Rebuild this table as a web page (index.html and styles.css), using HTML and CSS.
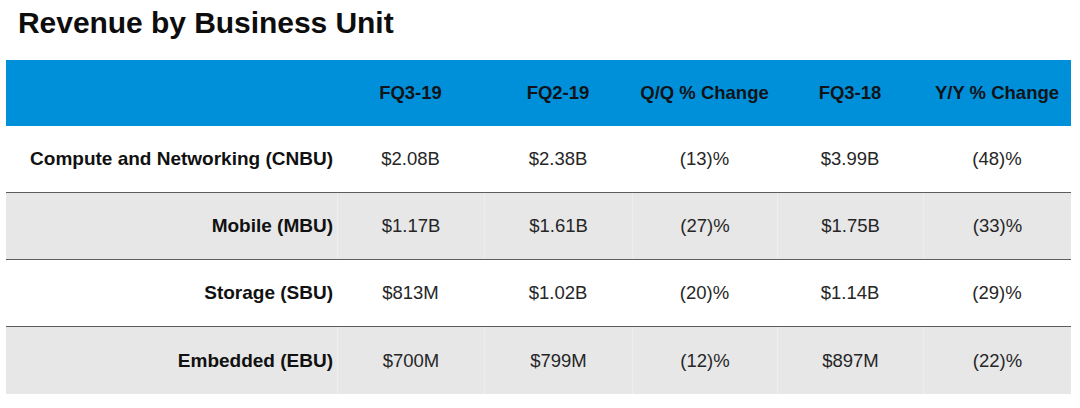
FILE: index.html
```html
<!DOCTYPE html>
<html lang="en">
<head>
<meta charset="utf-8">
<title>Revenue by Business Unit</title>
<link rel="stylesheet" href="styles.css">
</head>
<body>
<h1 class="title">Revenue by Business Unit</h1>
<div class="table">
  <div class="row head">
    <div class="cell label"></div>
    <div class="cell">FQ3-19</div>
    <div class="cell">FQ2-19</div>
    <div class="cell">Q/Q % Change</div>
    <div class="cell">FQ3-18</div>
    <div class="cell">Y/Y % Change</div>
  </div>
  <div class="row body">
    <div class="cell label">Compute and Networking (CNBU)</div>
    <div class="cell">$2.08B</div>
    <div class="cell">$2.38B</div>
    <div class="cell">(13)%</div>
    <div class="cell">$3.99B</div>
    <div class="cell">(48)%</div>
  </div>
  <div class="row body alt">
    <div class="cell label">Mobile (MBU)</div>
    <div class="cell">$1.17B</div>
    <div class="cell">$1.61B</div>
    <div class="cell">(27)%</div>
    <div class="cell">$1.75B</div>
    <div class="cell">(33)%</div>
  </div>
  <div class="row body">
    <div class="cell label">Storage (SBU)</div>
    <div class="cell">$813M</div>
    <div class="cell">$1.02B</div>
    <div class="cell">(20)%</div>
    <div class="cell">$1.14B</div>
    <div class="cell">(29)%</div>
  </div>
  <div class="row body alt last">
    <div class="cell label">Embedded (EBU)</div>
    <div class="cell">$700M</div>
    <div class="cell">$799M</div>
    <div class="cell">(12)%</div>
    <div class="cell">$897M</div>
    <div class="cell">(22)%</div>
  </div>
</div>
</body>
</html>
```

FILE: styles.css
```css
html, body {
  margin: 0;
  padding: 0;
  background: #ffffff;
}

body {
  font-family: "Liberation Sans", Arial, sans-serif;
  width: 1080px;
  height: 408px;
  overflow: hidden;
}

.title {
  margin: 8px 0 0 0;
  padding-left: 18px;
  font-size: 30px;
  line-height: 30px;
  height: 30px;
  font-weight: 700;
  color: #0d0d0d;
  letter-spacing: -0.05px;
}

.table {
  margin: 22px 0 0 6px;
  width: 1065px;
}

.row {
  display: grid;
  grid-template-columns: 331px 147px 148px 145px 146px 148px;
}

.cell {
  display: flex;
  align-items: center;
  justify-content: center;
  white-space: nowrap;
}

.head {
  height: 66px;
  background: #0090da;
  color: #101418;
  font-weight: 700;
  font-size: 18.5px;
}

.body {
  height: 66px;
  border-bottom: 1px solid #5c5c5c;
  background: #ffffff;
  color: #262626;
  font-size: 18.5px;
}

.body.last {
  border-bottom: none;
  height: 67px;
}

.body.alt {
  background: #e7e7e7;
}

.body.alt .cell + .cell {
  border-left: 1px solid #eeeeee;
}

.body .label {
  justify-content: flex-end;
  padding-right: 4px;
  font-weight: 700;
  font-size: 19px;
  color: #111111;
}
```
